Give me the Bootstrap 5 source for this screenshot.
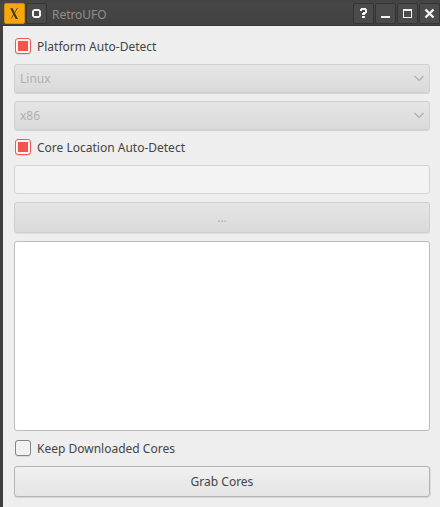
<!DOCTYPE html>
<html lang="en">
<head>
<meta charset="utf-8">
<title>RetroUFO</title>
<link href="https://cdn.jsdelivr.net/npm/bootstrap@5.3.0/dist/css/bootstrap.min.css" rel="stylesheet">
<style>
body{font-family:"Noto Sans",sans-serif;font-size:12px;line-height:16px;color:#454545;background:#eee;height:507px;overflow:hidden}
.titlebar{height:26px;background:linear-gradient(#434343,#464646 4px,#414141);border-bottom:1px solid #383838;padding:3px 0 0 4px;color:#918f89}
.caption{padding:4px 0 0 5px;letter-spacing:-.05px}
.wbtn{width:21px;height:21px;border-radius:2px;background:#4b4b4b;border:1px solid #353535;flex:none}
.wbtn.app{background:#f7a70d;border-color:#d08c10;margin-right:1px}
.wbtn svg{display:block;width:19px;height:19px}
.wtools{gap:1px;width:87px}
.pane{height:481px;border-left:3px solid #404040;padding:12px 10px 0 11px}
.form-check.opt{height:16px;min-height:0;margin-bottom:0;padding:0 0 0 1px;gap:6px}
.opt label{padding-top:1px}
.opt .form-check-input{width:16px;height:16px;margin:0;float:none;border:1px solid #848484;border-radius:3px;background:#f1f1f1;box-shadow:0 1px 0 #d9d9d9;flex:none}
.opt .form-check-input:checked{border-color:#ee5a50;background:linear-gradient(#f4544d,#f4544d) center/10px 10px no-repeat #f8f4f4}
.combo,.push{border:1px solid #d0d0d0;border-radius:3px;font-size:12px;line-height:16px;width:416px}
.combo{height:29px;padding:0 4px 0 5px;color:#b0b0b0;background:linear-gradient(#e5e5e5,#dadada);box-shadow:0 1px 0 #d3d3d3}
.push{height:31px;padding:0;color:#454545;background:linear-gradient(#f0f0f0,#e5e5e5);border-color:#b4b4b4;box-shadow:0 1px 0 #d6d6d6,1px 0 0 #dcdcdc}
.push:disabled{opacity:1;color:#b0b0b0;background:linear-gradient(#e5e5e5,#dadada);border-color:#cecece;box-shadow:0 1px 0 #dedede}
.path{height:29px;min-height:0;width:416px;border:1px solid #d3d3d3;border-radius:3px;background:#f3f3f3!important}
.log{height:190px;min-height:0;width:416px;border:1px solid #bcbcbc;border-radius:3px;resize:none;background:#fff}
.g8{margin-top:8px}.g9{margin-top:9px}.g10{margin-top:10px}
</style>
</head>
<body>
<header class="titlebar d-flex">
  <span class="wbtn app"><svg viewBox="0 0 19 19" fill="none" stroke="#3a3423"><path d="M6.500 4.500l5 10" stroke-width="2"/><path d="M12.500 4L6.200 14.500M5.500 4.500H7M11 14.500h2" stroke-width=".8"/></svg></span>
  <span class="wbtn"><svg viewBox="0 0 19 19"><path d="M7 5h5l2 2v5l-2 2H7l-2-2V7zM7 7v5h5V7z" fill="#f2f2f2" fill-rule="evenodd"/></svg></span>
  <span class="flex-grow-1 caption">RetroUFO</span>
  <div class="wtools d-flex">
    <span class="wbtn"><svg viewBox="0 0 19 19" fill="#f2f2f2"><path d="M6 5h1V4h5v1h1v4h-1v1h-1v1H8V9h1V8h2V6H8v1H6zM8 12h3v2H8z"/></svg></span>
    <span class="wbtn"><svg viewBox="0 0 19 19"><path d="M5 12h9v2H5z" fill="#f2f2f2"/></svg></span>
    <span class="wbtn"><svg viewBox="0 0 19 19"><path d="M5 5h9v9H5zM6 7v6h7V7z" fill="#f2f2f2" fill-rule="evenodd"/></svg></span>
    <span class="wbtn"><svg viewBox="0 0 19 19"><path d="M5.500 5.500l8 8m0-8l-8 8" stroke="#f2f2f2" stroke-width="2.400"/></svg></span>
  </div>
</header>
<main class="pane">
  <div class="form-check opt d-flex align-items-center"><input class="form-check-input" type="checkbox" id="platform" checked><label for="platform">Platform Auto-Detect</label></div>
  <div class="combo g10 d-flex align-items-center justify-content-between"><span>Linux</span><svg width="12" height="8" viewBox="0 0 12 8" fill="none" stroke="#adadad" stroke-width="1.100"><path d="M1.500 1L6 5.500 10.500 1"/></svg></div>
  <div class="combo g8 d-flex align-items-center justify-content-between"><span>x86</span><svg width="12" height="8" viewBox="0 0 12 8" fill="none" stroke="#adadad" stroke-width="1.100"><path d="M1.500 1L6 5.500 10.500 1"/></svg></div>
  <div class="form-check opt g9 d-flex align-items-center"><input class="form-check-input" type="checkbox" id="location" checked><label for="location">Core Location Auto-Detect</label></div>
  <input class="form-control path g10" type="text" disabled aria-label="Core location">
  <button class="btn push g8 d-block" disabled>...</button>
  <textarea class="form-control log g8" aria-label="Log"></textarea>
  <div class="form-check opt g9 d-flex align-items-center"><input class="form-check-input" type="checkbox" id="keep"><label for="keep">Keep Downloaded Cores</label></div>
  <button class="btn push g10 d-block">Grab Cores</button>
</main>
<script src="https://cdn.jsdelivr.net/npm/bootstrap@5.3.0/dist/js/bootstrap.bundle.min.js"></script>
</body>
</html>
